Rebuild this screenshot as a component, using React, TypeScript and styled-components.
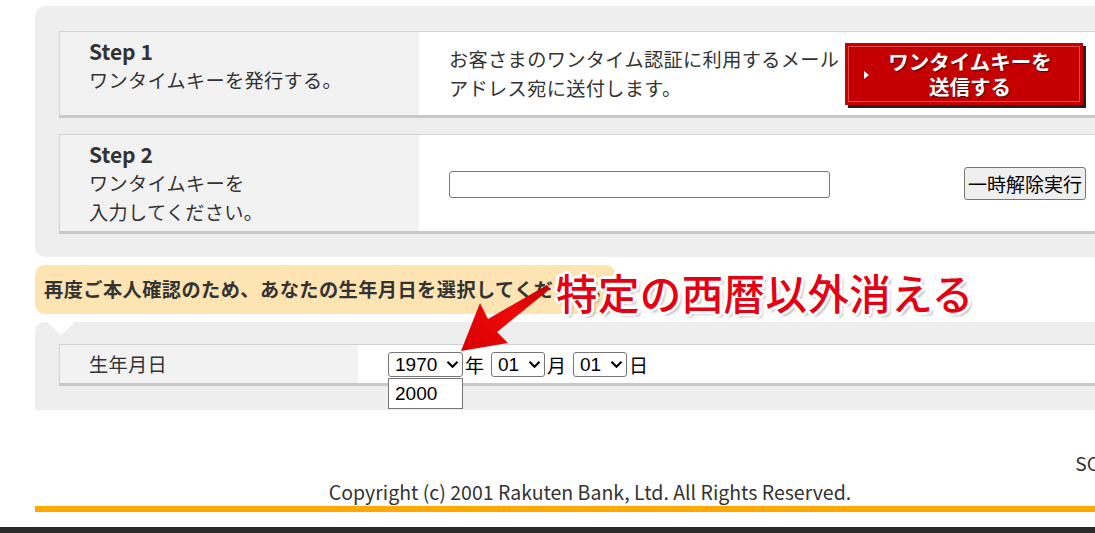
import React from "react";
import styled, { createGlobalStyle } from "styled-components";

const GlobalStyle = createGlobalStyle`
  html, body {
    margin: 0;
    padding: 0;
    background: #ffffff;
    overflow: hidden;
  }
  body {
    font-family: "Noto Sans CJK JP", "Noto Sans", sans-serif;
    color: #333333;
  }
`;

const Page = styled.div`
  width: 1095px;
  height: 533px;
  overflow: hidden;
`;

const Wrapper = styled.div`
  position: relative;
  width: 1110px;
  margin-left: 35px;
  padding-top: 6px;
`;

const Panel = styled.div`
  background: #eeeeee;
  border-radius: 10px;
  padding: 25px 24px 23px 24px;
  display: flex;
  flex-direction: column;
  gap: 16px;
`;

const Row = styled.div<{ $h: number }>`
  display: flex;
  box-sizing: border-box;
  height: ${(p) => p.$h}px;
  border: 1px solid #d2d2d2;
  border-bottom: 3px solid #c8c8c8;
  background: #ffffff;
`;

const LeftCell = styled.div<{ $w: number; $center?: boolean }>`
  width: ${(p) => p.$w}px;
  flex: none;
  background: #f2f2f2;
  box-sizing: border-box;
  padding: ${(p) => (p.$center ? "0 0 0 29px" : "5px 0 0 29px")};
  display: flex;
  flex-direction: column;
  justify-content: ${(p) => (p.$center ? "center" : "flex-start")};
  font-size: 19.2px;
  line-height: 29px;
  letter-spacing: 0.3px;
`;

const StepTitle = styled.div`
  font-weight: 700;
  font-size: 21px;
  letter-spacing: 0;
`;

const RightCell = styled.div`
  flex: 1;
  display: flex;
  align-items: center;
  padding-left: 30px;
  font-size: 19.2px;
  line-height: 29px;
`;

const Desc = styled.div`
  width: 396px;
  flex: none;
  letter-spacing: 0.35px;
  white-space: nowrap;
`;

const SendButton = styled.button`
  width: 238px;
  height: 62px;
  margin-top: 1px;
  flex: none;
  position: relative;
  border: none;
  background: #c40000;
  box-shadow: inset 0 0 0 3px #c40000, inset 0 0 0 4px #dc4a4a,
    3px 3px 0 #222222;
  color: #ffffff;
  font-family: "Noto Sans CJK JP", sans-serif;
  font-weight: 700;
  font-size: 20.5px;
  line-height: 25px;
  padding: 0 0 0 12px;
  text-shadow: 1px 1px 1px rgba(0, 0, 0, 0.55);
  display: flex;
  align-items: center;
  justify-content: center;
`;

const Tri = styled.span`
  position: absolute;
  left: 19px;
  top: 28px;
  width: 0;
  height: 0;
  border-top: 4px solid transparent;
  border-bottom: 4px solid transparent;
  border-left: 5px solid #ffffff;
`;

const SendLabel = styled.span`
  display: block;
`;

const KeyInput = styled.input`
  width: 381px;
  height: 27px;
  box-sizing: border-box;
  border: 1px solid #767676;
  border-radius: 3px;
  flex: none;
  margin-top: 3px;
`;

const ReleaseButton = styled.button`
  margin-left: 134px;
  width: 122px;
  height: 33px;
  box-sizing: border-box;
  border: 1px solid #767676;
  border-radius: 3px;
  background: #efefef;
  color: #000000;
  font-family: "Noto Sans CJK JP", sans-serif;
  font-size: 19px;
  font-weight: 400;
  padding: 0;
  white-space: nowrap;
  flex: none;
`;

const BirthSection = styled.div`
  position: relative;
`;

const Balloon = styled.div`
  position: relative;
  display: inline-block;
  margin-top: 8px;
  background: #fde4b2;
  border-radius: 10px;
  padding: 10px 4px 10px 9px;
  font-weight: 700;
  font-size: 19.2px;
  letter-spacing: 0.45px;
  line-height: 29px;
  color: #333333;
  white-space: nowrap;
  &::after {
    content: "";
    position: absolute;
    left: 12px;
    top: calc(100% + 8px);
    width: 0;
    height: 0;
    border-left: 14px solid transparent;
    border-right: 14px solid transparent;
    border-top: 13px solid #ffffff;
  }
`;

const BirthPanel = styled.div`
  margin-top: 8px;
  background: #eeeeee;
  border-radius: 10px 10px 0 0;
  padding: 22px 24px 24px 24px;
`;

const SelectWrap = styled.span`
  position: relative;
  display: inline-flex;
`;

const SelectBox = styled.span<{ $w: number }>`
  display: inline-flex;
  align-items: center;
  justify-content: space-between;
  width: ${(p) => p.$w}px;
  height: 25px;
  margin-top: 1px;
  box-sizing: border-box;
  border: 1px solid #767676;
  border-radius: 3px;
  padding: 0 3px 0 6px;
  background: #ffffff;
  font-family: "Liberation Sans", Arial, sans-serif;
  font-size: 19px;
  color: #000000;
`;

const Unit = styled.span`
  margin: 0 7px 0 2px;
  font-size: 19px;
  color: #000000;
`;

const DropList = styled.div`
  position: absolute;
  left: 0;
  top: calc(100% + 1px);
  width: 75px;
  height: 31px;
  box-sizing: border-box;
  border: 1px solid #777777;
  background: #ffffff;
  padding-left: 6px;
  font-family: "Liberation Sans", Arial, sans-serif;
  font-size: 19px;
  line-height: 29px;
  color: #000000;
  z-index: 2;
`;

const Annotation = styled.div`
  position: absolute;
  left: 521px;
  top: 9px;
  font-size: 41.5px;
  line-height: 52px;
  font-weight: 500;
  color: #e60012;
  letter-spacing: 0.4px;
  white-space: nowrap;
  z-index: 3;
  text-shadow: -2px -2px 0 #fff, 2px -2px 0 #fff, -2px 2px 0 #fff,
    2px 2px 0 #fff, 0 -3px 0 #fff, 0 3px 0 #fff, -3px 0 0 #fff, 3px 0 0 #fff,
    3px 3px 3px rgba(0, 0, 0, 0.35);
`;

const ArrowSvg = styled.svg`
  position: absolute;
  left: 420px;
  top: 25px;
  z-index: 3;
`;

const SideLink = styled.div`
  margin-top: 39px;
  height: 29px;
  line-height: 29px;
  font-size: 19.2px;
  display: flex;
  justify-content: flex-end;
  padding-right: 46px;
`;

const Copyright = styled.div`
  height: 28px;
  line-height: 28px;
  font-size: 19.5px;
  text-align: center;
  color: #333333;
`;

const OrangeLine = styled.div`
  height: 6px;
  background: #ffa800;
`;

const DarkBar = styled.div`
  margin-top: 15px;
  height: 6px;
  background: #2b2b2b;
`;

const Chevron = () => (
  <svg width="13" height="9" viewBox="0 0 13 9">
    <path d="M1.5 1.8 L6.5 6.8 L11.5 1.8" fill="none" stroke="#000" strokeWidth="2" />
  </svg>
);

export default function App() {
  return (
    <Page>
      <GlobalStyle />
      <Wrapper>
        <Panel>
          <Row $h={87}>
            <LeftCell $w={359}>
              <StepTitle>Step 1</StepTitle>
              <div>ワンタイムキーを発行する。</div>
            </LeftCell>
            <RightCell>
              <Desc>
                お客さまのワンタイム認証に利用するメール
                <br />
                アドレス宛に送付します。
              </Desc>
              <SendButton>
                <Tri />
                <SendLabel>
                  ワンタイムキーを
                  <br />
                  送信する
                </SendLabel>
              </SendButton>
            </RightCell>
          </Row>
          <Row $h={100}>
            <LeftCell $w={359}>
              <StepTitle>Step 2</StepTitle>
              <div>ワンタイムキーを</div>
              <div>入力してください。</div>
            </LeftCell>
            <RightCell>
              <KeyInput type="text" />
              <ReleaseButton>一時解除実行</ReleaseButton>
            </RightCell>
          </Row>
        </Panel>

        <BirthSection>
          <Balloon>再度ご本人確認のため、あなたの生年月日を選択してください。</Balloon>
          <BirthPanel>
            <Row $h={42}>
              <LeftCell $w={298} $center>
                生年月日
              </LeftCell>
              <RightCell>
                <SelectWrap>
                  <SelectBox $w={75}>
                    1970
                    <Chevron />
                  </SelectBox>
                  <DropList>2000</DropList>
                </SelectWrap>
                <Unit>年</Unit>
                <SelectBox $w={54}>
                  01
                  <Chevron />
                </SelectBox>
                <Unit>月</Unit>
                <SelectBox $w={54}>
                  01
                  <Chevron />
                </SelectBox>
                <Unit>日</Unit>
              </RightCell>
            </Row>
          </BirthPanel>
          <Annotation>特定の西暦以外消える</Annotation>
          <ArrowSvg width="100" height="75" viewBox="0 0 100 75">
            <defs>
              <linearGradient id="arrowGrad" x1="0" y1="1" x2="1" y2="0">
                <stop offset="0" stopColor="#d80000" />
                <stop offset="0.6" stopColor="#ee0a0a" />
                <stop offset="1" stopColor="#c00000" />
              </linearGradient>
            </defs>
            <polygon
              points="6,69 25,21 33,37 92,3 95,7 42,50 53,61"
              fill="url(#arrowGrad)"
            />
          </ArrowSvg>
        </BirthSection>

        <SideLink>SC</SideLink>
        <Copyright>Copyright (c) 2001 Rakuten Bank, Ltd. All Rights Reserved.</Copyright>
        <OrangeLine />
      </Wrapper>
      <DarkBar />
    </Page>
  );
}
